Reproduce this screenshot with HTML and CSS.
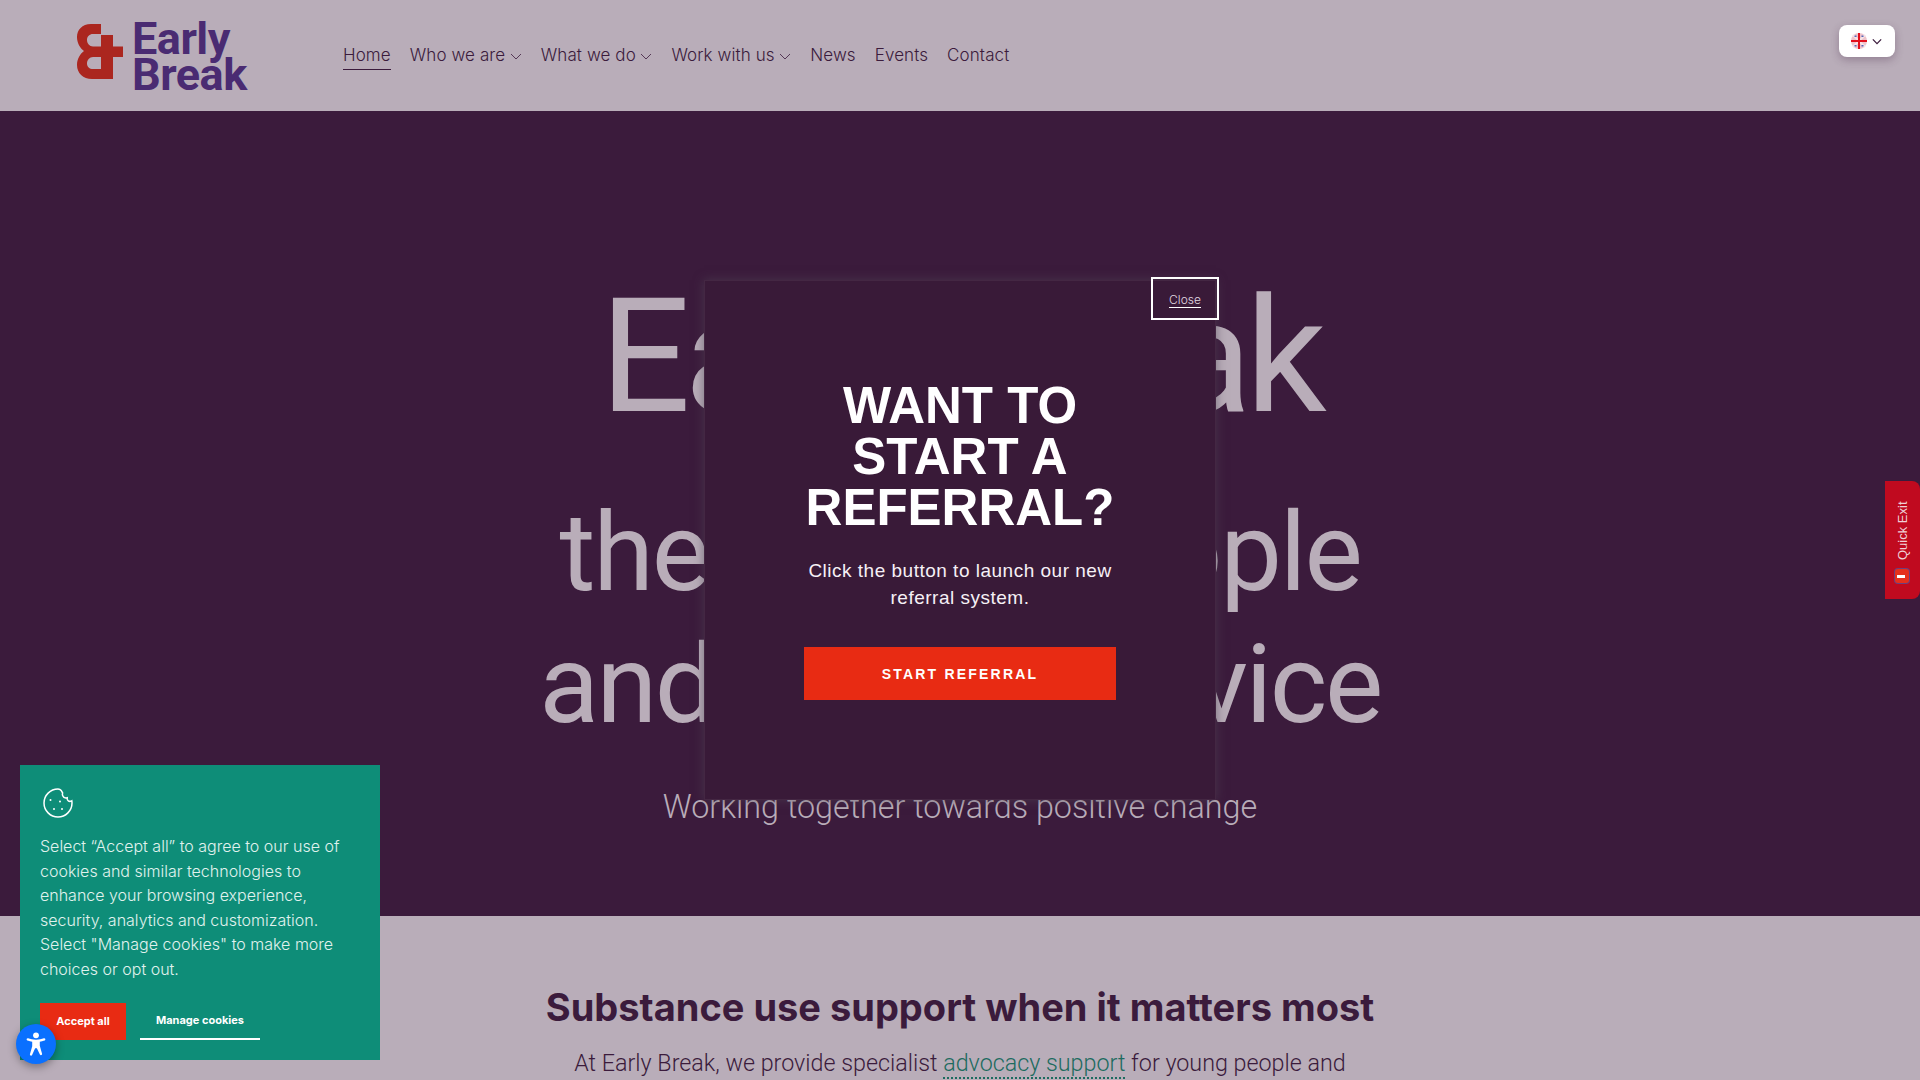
FILE: index.html
```html
<!DOCTYPE html>
<html lang="en">
<head>
<meta charset="utf-8">
<title>Early Break</title>
<link rel="stylesheet" href="styles.css">
</head>
<body>
<header class="site-header">
  <a class="logo" href="#">
    <svg class="logo-mark" viewBox="0 0 46 55" width="46" height="55" aria-hidden="true">
      <path class="logo-red" fill-rule="evenodd" d="M24 0H14C5 0 0 6 0 13C0 19 3 24 7 27C3 30 0 35 0 41C0 49 6 55 15 55H36V33H46V22.500H36V11H24V22.500H16C12.500 22.500 10 19.500 10 16C10 12.500 12.500 10 16 10H24ZM24 33V45H16C12.500 45 10 43 10 39.500C10 36 12.500 33 16 33Z"/>
    </svg>
    <span class="logo-text">Early<br>Break</span>
  </a>
  <nav class="nav">
    <a class="nav-link active" href="#">Home</a>
    <a class="nav-link" href="#">Who we are<svg class="chev" viewBox="0 0 12 7"><path d="M1 1l5 5 5-5"/></svg></a>
    <a class="nav-link" href="#">What we do<svg class="chev" viewBox="0 0 12 7"><path d="M1 1l5 5 5-5"/></svg></a>
    <a class="nav-link" href="#">Work with us<svg class="chev" viewBox="0 0 12 7"><path d="M1 1l5 5 5-5"/></svg></a>
    <a class="nav-link" href="#">News</a>
    <a class="nav-link" href="#">Events</a>
    <a class="nav-link" href="#">Contact</a>
  </nav>
  <button class="lang">
    <svg class="flag" viewBox="0 0 16 16" width="16" height="16" aria-hidden="true">
      <circle cx="8" cy="8" r="8" fill="#eec3cb"/>
      <path d="M2 2l12 12M14 2L2 14" stroke="#f7e4e7" stroke-width="2"/>
      <path d="M3.500 2.500h2v1.500h-2zM10.500 2.500h2v1.500h-2zM3.500 12h2v1.500h-2zM10.500 12h2v1.500h-2z" fill="#5468b8"/>
      <path d="M8 0v16M0 8h16" stroke="#e30f1c" stroke-width="2"/>
    </svg>
    <svg class="lang-chev" viewBox="0 0 12 8"><path d="M1 1.500l5 5 5-5"/></svg>
  </button>
</header>

<main>
  <section class="hero">
    <h1 class="hero-title"><span class="hero-l1">Early Break</span><span class="hero-l2">the young people</span><span class="hero-l3">and family service</span></h1>
    <p class="hero-sub">Working together towards positive change</p>
  </section>
  <section class="intro">
    <h2>Substance use support when it matters most</h2>
    <p>At Early Break, we provide specialist <a href="#">advocacy support</a> for young people and</p>
  </section>
</main>

<div class="modal">
  <button class="modal-close"><span>Close</span></button>
  <h2 class="modal-title">WANT TO START A REFERRAL?</h2>
  <p class="modal-text">Click the button to launch our new referral system.</p>
  <a class="modal-btn" href="#">START REFERRAL</a>
</div>

<a class="quick-exit" href="#">
  <span class="quick-icon"></span>
  <span>Quick Exit</span>
</a>

<aside class="cookie">
  <svg class="cookie-icon" viewBox="0 0 32 32" width="32" height="32" aria-hidden="true">
    <path d="M16 2C8.300 2 2 8.300 2 16s6.300 14 14 14 14-6.300 14-14c0-1-.1-1.600-.2-2.200-1.600.9-3.500.4-4.300-1-.4-.8-.4-1.500-.3-2.100-2 .6-3.800-.3-4.500-2-.4-1-.4-2-.1-2.800C19.300 3 18.700 2.700 18 2.500 17.300 2.200 16.700 2 16 2z"/>
    <circle cx="8.500" cy="13" r="1"/><circle cx="18" cy="14.500" r="1"/><circle cx="12" cy="22" r="1"/><circle cx="20" cy="22" r="1"/>
  </svg>
  <p>Select “Accept all” to agree to our use of cookies and similar technologies to enhance your browsing experience, security, analytics and customization. Select "Manage cookies" to make more choices or opt out.</p>
  <div class="cookie-actions">
    <button class="cookie-accept">Accept all</button>
    <button class="cookie-manage">Manage cookies</button>
  </div>
</aside>

<button class="a11y" aria-label="Accessibility">
  <svg viewBox="0 0 24 24" width="26" height="26" aria-hidden="true">
    <circle cx="12" cy="4" r="2.700"/>
    <path d="M3.500 8.200C3 7.300 3.800 6.400 4.700 6.700 6.800 7.500 9.300 8 12 8s5.200-.5 7.300-1.300c.9-.3 1.700.6 1.200 1.500-.2.300-.4.500-.7.600-1.500.6-3 1-4.300 1.200v3.500l2.100 7.500c.3 1.200-1.400 1.900-2 .7L12.800 16h-1.600l-2.800 6.200c-.6 1.200-2.300.5-2-.7l2.100-7.500V10c-1.300-.2-2.800-.6-4.300-1.200-.3-.1-.5-.3-.7-.6z"/>
  </svg>
</button>
</body>
</html>
```
FILE: styles.css
```css
* { box-sizing: border-box; }
html, body { margin: 0; padding: 0; height: 1080px; overflow: hidden; }
body { font-family: Inter, "Liberation Sans", sans-serif; background: #b9adb9; color: #3b1b3c; position: relative; }
a { color: inherit; text-decoration: none; }
button { font: inherit; border: 0; cursor: pointer; }

.site-header { height: 111px; background: #b9adb9; display: flex; align-items: center; padding-left: 77px; position: relative; }
.logo { display: flex; align-items: flex-start; gap: 9px; width: 266px; height: 72px; }
.logo-mark { margin-top: 4px; flex: none; }
.logo-red { fill: #ab261f; }
.logo-text { font-family: Roboto, sans-serif; font-weight: 700; font-size: 45px; line-height: 36px; color: #4a2b72; letter-spacing: -.5px; margin-top: 1px; }
.nav { display: flex; gap: 19px; align-items: center; }
.nav-link { font-size: 17px; font-weight: 300; color: #3b1b3c; line-height: 28px; display: flex; align-items: center; letter-spacing: .1px; border-bottom: 1px solid transparent; }
.nav-link.active { border-bottom-color: #3b1b3c; }
.chev { width: 12px; height: 7px; margin-left: 4.500px; margin-top: 2px; }
.chev path { fill: none; stroke: #3b1b3c; stroke-width: .8; }
.lang { position: absolute; top: 25px; right: 25px; width: 56px; height: 32px; border-radius: 8px; background: #fff; box-shadow: 0 3px 8px rgba(59,27,60,.3); display: flex; align-items: center; padding: 0 0 0 12px; gap: 5px; }
.lang-chev { width: 10px; height: 7px; }
.lang-chev path { fill: none; stroke: #3b1b3c; stroke-width: 1.500; }

.hero { height: 805px; background: #3b1b3c; text-align: center; color: #b9adb9; overflow: hidden; position: relative; }
.hero-title { margin: 0; font-weight: 400; font-family: Roboto, sans-serif; }
.hero-title span { display: block; white-space: nowrap; }
.hero-l1 { font-size: 160px; line-height: 180px; padding-top: 156px; letter-spacing: -6.500px; }
.hero-l2 { font-size: 110px; line-height: 132px; margin-top: 40px; letter-spacing: -2.200px; }
.hero-l3 { font-size: 110px; line-height: 132px; letter-spacing: -2.500px; }
.hero-sub { margin: 0; font-family: Roboto, sans-serif; font-size: 32.300px; font-weight: 300; line-height: 44px; position: absolute; left: 0; right: 0; top: 674px; }

.intro { text-align: center; }
.intro h2 { margin: 0; padding-top: 66px; font-size: 38px; font-weight: 700; line-height: 50px; color: #3b1b3c; }
.intro p { margin: 14px 0 0; font-family: Roboto, sans-serif; font-size: 23.300px; font-weight: 300; line-height: 34px; }
.intro a { color: #1d6b5f; border-bottom: 2px dotted #1d6b5f; }

.modal { position: absolute; top: 280px; left: 704px; width: 512px; height: 520px; background: #391a38; border: 1px solid rgba(255,255,255,.06); box-shadow: 0 0 10px rgba(80,70,85,.6); text-align: center; font-family: "Liberation Sans", sans-serif; color: #fff; padding: 99px 90px 0; display: flex; flex-direction: column; align-items: center; }
.modal-close { position: absolute; top: -4px; right: -4px; width: 68px; height: 43px; background: transparent; border: 2px solid #fff; color: #e0d9e0; font-family: Inter, sans-serif; font-size: 12px; font-weight: 300; padding: 0; display: flex; align-items: center; justify-content: center; }
.modal-close span { border-bottom: 1px solid #fff; line-height: 15px; margin-top: 3px; }
.modal-title { margin: 0; font-size: 51px; line-height: 51px; font-weight: 700; width: 340px; }
.modal-text { margin: 24px 0 0; font-size: 19px; line-height: 27px; letter-spacing: .5px; width: 332px; color: #f6f0f6; }
.modal-btn { margin-top: 36px; width: 312px; height: 53px; flex: none; background: #e82b13; color: #fff; font-weight: 700; font-size: 14px; letter-spacing: 2.200px; display: flex; align-items: center; justify-content: center; }

.quick-exit { position: absolute; right: 0; top: 481px; width: 35px; height: 118px; background: #c00a1f; border-radius: 8px 0 0 8px; color: #efd0d6; font-family: "Liberation Sans", sans-serif; font-size: 13px; writing-mode: vertical-rl; transform: rotate(180deg); display: flex; align-items: center; justify-content: flex-start; gap: 9px; padding-top: 16px; }
.quick-icon { width: 14px; height: 14px; background: #e5301c; border-radius: 3px; box-shadow: 0 0 0 1px #6b3f80; display: block; position: relative; }
.quick-icon::after { content: ""; position: absolute; left: 4px; top: 5px; width: 8px; height: 3px; background: #fff; }

.cookie { position: absolute; left: 20px; top: 765px; width: 360px; height: 295px; background: #0e8d78; color: #e0f2ee; padding: 20px; }
.cookie-icon { display: block; margin: 2px 0 0 2px; }
.cookie-icon path { fill: none; stroke: #fff; stroke-width: 1.500; }
.cookie-icon circle { fill: #fff; }
.cookie p { margin: 15px 0 0; font-size: 16px; font-weight: 300; line-height: 24.600px; }
.cookie-actions { display: flex; align-items: flex-end; gap: 14px; margin-top: 21px; }
.cookie-accept { width: 86px; height: 37px; background: #e82b13; color: #fff; font-size: 11px; font-weight: 700; padding: 0; }
.cookie-manage { width: 120px; height: 37px; background: transparent; color: #fff; font-size: 11px; font-weight: 700; padding: 0 0 1px; border-bottom: 2px solid #fff; }

.a11y { position: absolute; left: 16px; top: 1024px; width: 40px; height: 40px; border-radius: 50%; background: #0a70ff; box-shadow: 0 3px 8px rgba(0,0,0,.35); display: flex; align-items: center; justify-content: center; padding: 0; }
.a11y svg { fill: #fff; }
```
